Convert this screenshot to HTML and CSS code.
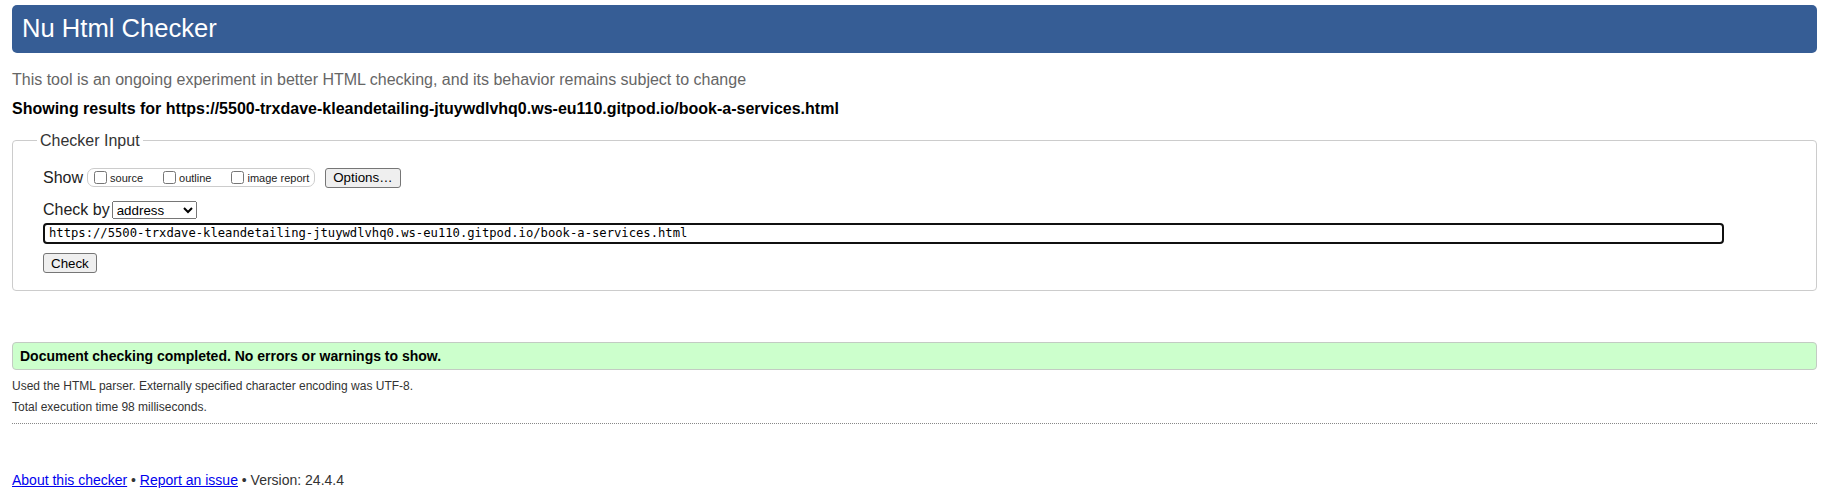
FILE: index.html
```html
<!DOCTYPE html>
<html lang="en">
<head>
<meta charset="utf-8">
<title>Nu Html Checker</title>
<link rel="stylesheet" href="styles.css">
</head>
<body>
<h1 class="title">Nu Html Checker</h1>
<p class="tagline">This tool is an ongoing experiment in better HTML checking, and its behavior remains subject to change</p>
<p class="showing">Showing results for https://5500-trxdave-kleandetailing-jtuywdlvhq0.ws-eu110.gitpod.io/book-a-services.html</p>
<form class="checker">
  <fieldset class="inputs">
    <legend class="legend">Checker Input</legend>
    <div class="row row-show">
      <span class="label">Show</span>
      <span class="opts">
        <label class="opt"><input type="checkbox" class="cb">source</label>
        <label class="opt"><input type="checkbox" class="cb">outline</label>
        <label class="opt"><input type="checkbox" class="cb">image report</label>
      </span>
      <button type="button" class="btn btn-options">Options…</button>
    </div>
    <div class="row row-by">
      <span class="label">Check by</span>
      <select class="select"><option>address</option></select>
    </div>
    <div class="row row-url">
      <input class="url" type="url" value="https://5500-trxdave-kleandetailing-jtuywdlvhq0.ws-eu110.gitpod.io/book-a-services.html">
    </div>
    <div class="row row-check">
      <button type="button" class="btn btn-check">Check</button>
    </div>
  </fieldset>
</form>
<p class="success">Document checking completed. No errors or warnings to show.</p>
<p class="details details-first">Used the HTML parser. Externally specified character encoding was UTF-8.</p>
<p class="details details-second">Total execution time 98 milliseconds.</p>
<hr class="rule">
<p class="footer"><a class="link" href="#">About this checker</a> • <a class="link" href="#">Report an issue</a> • Version: 24.4.4</p>
</body>
</html>
```
FILE: styles.css
```css
* { box-sizing: border-box; }
html, body { margin: 0; }
body {
  padding: 5px 10px 0 12px;
  font-family: "Liberation Sans", Arial, sans-serif;
  font-size: 16px;
  color: #222;
  background: #fff;
}
.title {
  margin: 0;
  height: 48px;
  padding: 0 10px;
  background: #365d95;
  color: #fff;
  font-weight: normal;
  font-size: 25.6px;
  line-height: 47px;
  border-radius: 5px;
}
.tagline {
  margin: 17.5px 0 0;
  line-height: 18px;
  color: #666;
}
.showing {
  margin: 11.3px 0 0;
  line-height: 18px;
  font-weight: bold;
  color: #000;
}
.checker { margin: 14px 0 0; }
.inputs {
  margin: 0;
  min-width: 0;
  padding: 18px 29px 17px 30px;
  border: 1px solid #ccc;
  border-radius: 4px;
}
.legend {
  padding: 0 3px;
  margin-left: -6px;
  line-height: 18px;
  color: #333;
}
.row { display: flex; align-items: center; }
.row-show { height: 20px; }
.row-by { height: 20px; margin-top: 12.7px; }
.row-url { margin-top: 2.5px; }
.row-check { margin-top: 9px; }
.label { line-height: 18px; color: #222; }
.opts {
  display: inline-flex;
  align-items: center;
  height: 19px;
  margin-left: 4px;
  padding: 0 5px 0 2px;
  border: 1px solid #ccc;
  border-radius: 7px;
  font-size: 11px;
  color: #222;
}
.opt { display: inline-flex; align-items: center; margin-right: 16px; }
.opt:last-child { margin-right: 0; }
.cb { width: 13px; height: 13px; margin: 0 3px 0 4px; }
.btn {
  font-family: "Liberation Sans", Arial, sans-serif;
  font-size: 13.33px;
  line-height: 15px;
  padding: 1px 7px;
  border: 1px solid #767676;
  border-radius: 3px;
  background: #efefef;
  color: #000;
}
.btn-options { margin-left: 10px; height: 20px; }
.btn-check { font-size: 13.33px; height: 20.5px; }
.select {
  margin-left: 2px;
  width: 85px;
  height: 18px;
  font-family: "Liberation Sans", Arial, sans-serif;
  font-size: 13.33px;
  color: #000;
}
.url {
  width: calc(100% - 63px);
  height: 21px;
  padding: 0 4px;
  border: 2px solid #101010;
  border-radius: 4px;
  font-family: "DejaVu Sans Mono", monospace;
  font-size: 12.2px;
  color: #000;
  background: #fff;
}
.success {
  margin: 50.5px 0 0;
  padding: 5px 7px;
  border: 1px solid #c3cbc3;
  border-radius: 4px;
  background: #ccffcc;
  font-size: 14px;
  line-height: 16px;
  font-weight: bold;
  color: #000;
}
.details {
  font-size: 12px;
  line-height: 14px;
  color: #333;
}
.details-first { margin: 9.1px 0 0; }
.details-second { margin: 6.7px 0 0; }
.rule {
  margin: 9px 0 0;
  height: 0;
  border: 0;
  border-top: 1px dotted #888;
}
.footer {
  margin: 48px 0 0;
  font-size: 14px;
  line-height: 16px;
  color: #333;
}
.link { color: #0000ee; text-decoration: underline; }
```
